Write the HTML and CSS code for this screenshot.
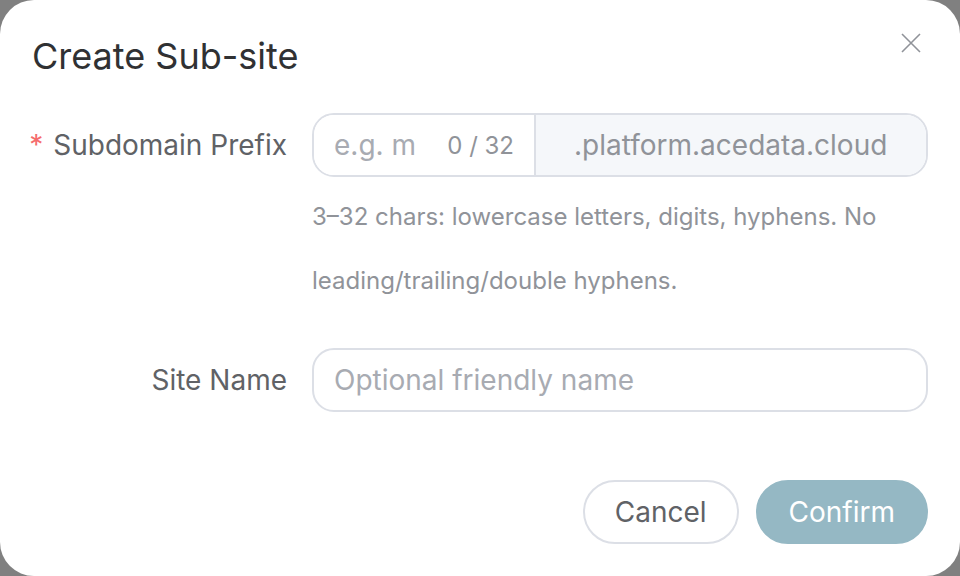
FILE: index.html
```html
<!DOCTYPE html>
<html lang="en">
<head>
<meta charset="utf-8">
<title>Create Sub-site</title>
<link rel="stylesheet" href="styles.css">
</head>
<body>
<div class="dialog">
  <header class="dialog-header">
    <h2 class="dialog-title">Create Sub-site</h2>
    <button class="close-btn" aria-label="Close">
      <svg viewBox="0 0 20 20" width="20" height="20"><path d="M1 1 L19 19 M19 1 L1 19" stroke="#909399" stroke-width="1.6" fill="none"/></svg>
    </button>
  </header>
  <form class="form">
    <div class="form-item first">
      <label class="form-label"><span class="req">*</span><span>Subdomain Prefix</span></label>
      <div class="form-content">
        <div class="input-group">
          <div class="input-wrap">
            <input class="input prefix-input" type="text" placeholder="e.g. my-site">
            <span class="count">0 / 32</span>
          </div>
          <div class="append">.platform.acedata.cloud</div>
        </div>
        <div class="hint">3–32 chars: lowercase letters, digits, hyphens. No leading/trailing/double hyphens.</div>
      </div>
    </div>
    <div class="form-item">
      <label class="form-label"><span>Site Name</span></label>
      <div class="form-content">
        <div class="input-wrap single">
          <input class="input" type="text" placeholder="Optional friendly name">
        </div>
      </div>
    </div>
  </form>
  <footer class="dialog-footer">
    <button class="btn btn-default" type="button">Cancel</button>
    <button class="btn btn-primary" type="button">Confirm</button>
  </footer>
</div>
</body>
</html>
```

FILE: styles.css
```css
* { box-sizing: border-box; }
html, body {
  margin: 0;
  padding: 0;
  width: 960px;
  height: 576px;
  overflow: hidden;
  background: #808080;
  font-family: "Inter", "Liberation Sans", sans-serif;
}
.dialog {
  width: 960px;
  height: 576px;
  background: #ffffff;
  border-radius: 34px;
  padding: 0 32px;
  display: flex;
  flex-direction: column;
}
.dialog-header {
  display: flex;
  justify-content: space-between;
  align-items: flex-start;
  height: 113px;
}
.dialog-title {
  margin: 32px 0 0 0;
  font-size: 36px;
  font-weight: 400;
  line-height: 48px;
  color: #303133;
}
.close-btn {
  margin: 33px 7px 0 0;
  padding: 0;
  border: 0;
  background: none;
  width: 20px;
  height: 20px;
  display: flex;
}
.form {
  display: flex;
  flex-direction: column;
}
.form-item {
  display: flex;
  align-items: flex-start;
}
.form-item.first { margin-bottom: 35px; }
.form-label {
  width: 280px;
  flex: none;
  padding-right: 25px;
  height: 64px;
  display: flex;
  align-items: center;
  justify-content: flex-end;
  white-space: nowrap;
  font-size: 28px;
  color: #606266;
}
.form-label span { flex: none; }
.req {
  color: #f56c6c;
  margin-right: 10px;
}
.form-content {
  flex: 1;
  min-width: 0;
}
.input-group {
  display: flex;
  height: 64px;
  border: 2px solid #dcdfe6;
  border-radius: 22px;
  overflow: hidden;
}
.input-wrap {
  display: flex;
  align-items: center;
  width: 220px;
  flex: none;
  padding: 0 20px;
  background: #fff;
}
.input-wrap.single {
  width: 100%;
  height: 64px;
  border: 2px solid #dcdfe6;
  border-radius: 22px;
}
.input {
  flex: 1;
  min-width: 0;
  border: 0;
  outline: none;
  padding: 0;
  background: transparent;
  font-family: inherit;
  font-size: 28px;
  color: #606266;
}
.prefix-input { flex: none; width: 82px; }
.input::placeholder { color: #a8abb2; }
.count {
  margin-left: auto;
  font-size: 24px;
  color: #909399;
}
.append {
  flex: 1;
  display: flex;
  align-items: center;
  padding: 0 38px;
  background: #f5f7fa;
  border-left: 2px solid #dcdfe6;
  font-size: 28px;
  color: #909399;
}
.hint {
  margin-top: 8px;
  font-size: 24px;
  line-height: 64px;
  color: #909399;
}
.dialog-footer {
  margin-top: auto;
  margin-bottom: 32px;
  display: flex;
  justify-content: flex-end;
  gap: 17px;
}
.btn {
  height: 64px;
  padding: 0 31px;
  border-radius: 32px;
  font-family: inherit;
  font-size: 28px;
  cursor: pointer;
}
.btn-default {
  background: #fff;
  border: 2px solid #dcdfe6;
  color: #606266;
  padding: 0 30px;
}
.btn-primary {
  background: #95b8c4;
  border: 2px solid #95b8c4;
  color: #ffffff;
}
```
